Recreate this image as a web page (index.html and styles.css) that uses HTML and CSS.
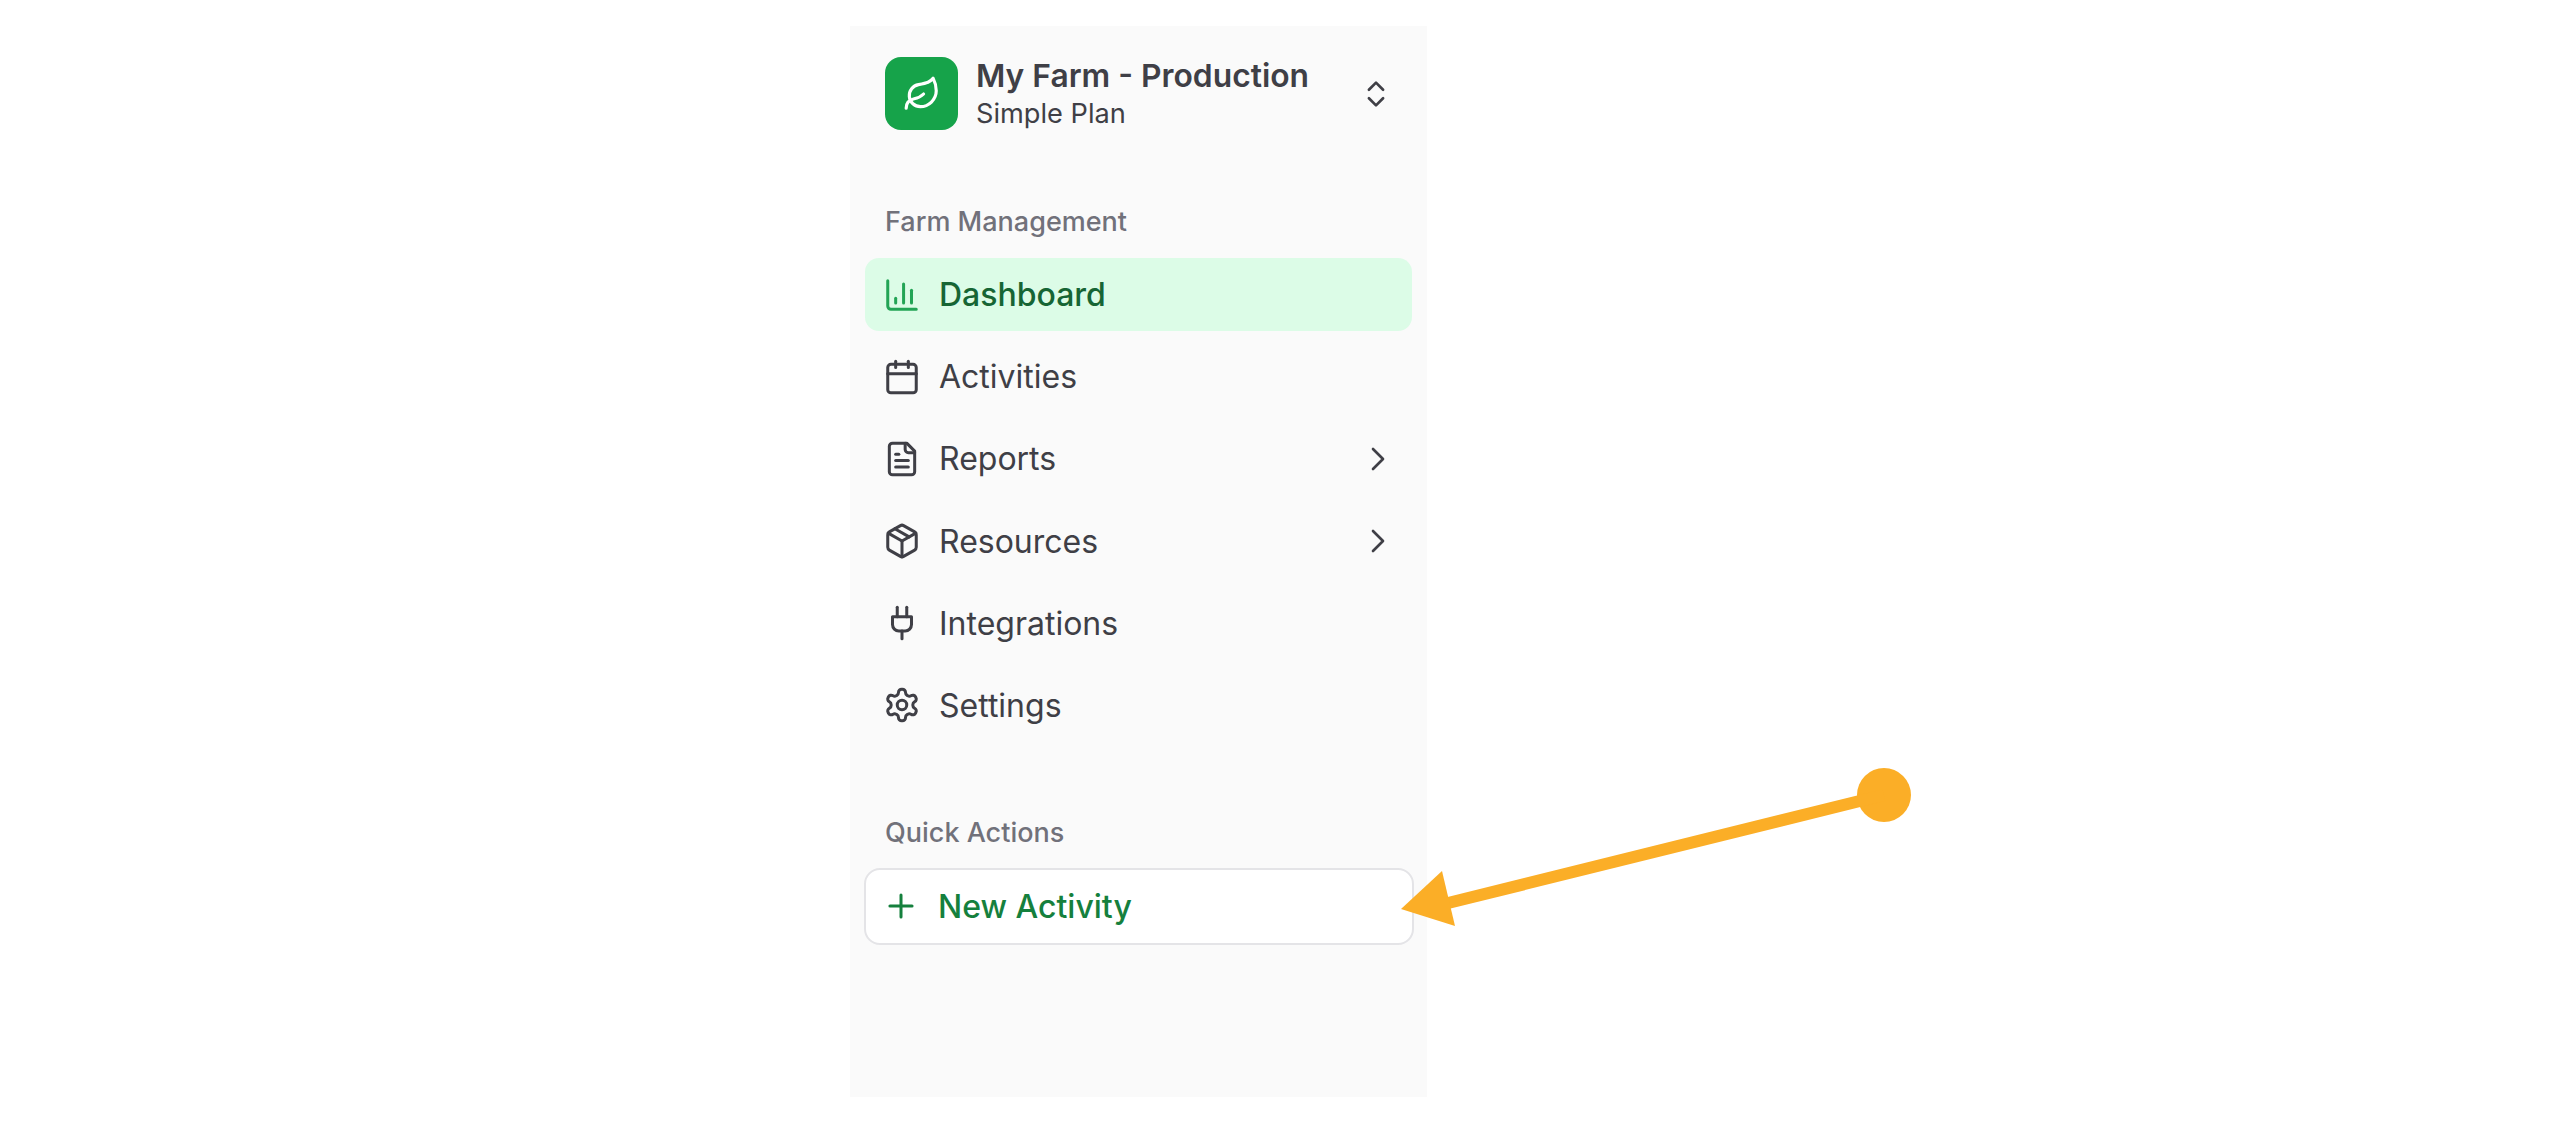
FILE: index.html
```html
<!DOCTYPE html>
<html lang="en">
<head>
<meta charset="utf-8">
<title>My Farm - Production</title>
<link rel="stylesheet" href="styles.css">
</head>
<body>
<div class="stage">
  <aside class="sidebar">
    <header class="team">
      <span class="logo">
        <svg class="logo-icon" viewBox="0 0 24 24"><path d="M11 20A7 7 0 0 1 9.8 6.1C15.5 5 17 4.48 19 2c1 2 2 4.18 2 8 0 5.5-4.78 10-10 10Z"/><path d="M2 21c0-3 1.85-5.36 5.08-6C9.5 14.52 12 13 13 12"/></svg>
      </span>
      <span class="team-text">
        <span class="team-name">My Farm - Production</span>
        <span class="team-plan">Simple Plan</span>
      </span>
      <svg class="updown" viewBox="0 0 24 24"><path d="m7 15 5 5 5-5"/><path d="m7 9 5-5 5 5"/></svg>
    </header>

    <section class="group group-main">
      <div class="group-label">Farm Management</div>
      <nav class="menu">
        <a class="item active">
          <svg class="icon" viewBox="0 0 24 24"><path d="M3 3v16a2 2 0 0 0 2 2h16"/><path d="M18 17V9"/><path d="M13 17V5"/><path d="M8 17v-3"/></svg>
          <span>Dashboard</span>
        </a>
        <a class="item">
          <svg class="icon" viewBox="0 0 24 24"><path d="M8 2v4"/><path d="M16 2v4"/><rect width="18" height="18" x="3" y="4" rx="2"/><path d="M3 10h18"/></svg>
          <span>Activities</span>
        </a>
        <a class="item">
          <svg class="icon" viewBox="0 0 24 24"><path d="M15 2H6a2 2 0 0 0-2 2v16a2 2 0 0 0 2 2h12a2 2 0 0 0 2-2V7Z"/><path d="M14 2v4a2 2 0 0 0 2 2h4"/><path d="M10 9H8"/><path d="M16 13H8"/><path d="M16 17H8"/></svg>
          <span>Reports</span>
          <svg class="chev" viewBox="0 0 24 24"><path d="m9 18 6-6-6-6"/></svg>
        </a>
        <a class="item">
          <svg class="icon" viewBox="0 0 24 24"><path d="M11 21.73a2 2 0 0 0 2 0l7-4A2 2 0 0 0 21 16V8a2 2 0 0 0-1-1.73l-7-4a2 2 0 0 0-2 0l-7 4A2 2 0 0 0 3 8v8a2 2 0 0 0 1 1.73z"/><path d="M12 22V12"/><path d="m3.3 7 8.7 5 8.7-5"/><path d="m7.5 4.27 9 5.15"/></svg>
          <span>Resources</span>
          <svg class="chev" viewBox="0 0 24 24"><path d="m9 18 6-6-6-6"/></svg>
        </a>
        <a class="item">
          <svg class="icon" viewBox="0 0 24 24"><path d="M12 22v-5"/><path d="M9 8V2"/><path d="M15 8V2"/><path d="M18 8v5a4 4 0 0 1-4 4h-4a4 4 0 0 1-4-4V8Z"/></svg>
          <span>Integrations</span>
        </a>
        <a class="item">
          <svg class="icon" viewBox="0 0 24 24"><path d="M12.22 2h-.44a2 2 0 0 0-2 2v.18a2 2 0 0 1-1 1.73l-.43.25a2 2 0 0 1-2 0l-.15-.08a2 2 0 0 0-2.73.73l-.22.38a2 2 0 0 0 .73 2.73l.15.1a2 2 0 0 1 1 1.72v.51a2 2 0 0 1-1 1.74l-.15.09a2 2 0 0 0-.73 2.73l.22.38a2 2 0 0 0 2.73.73l.15-.08a2 2 0 0 1 2 0l.43.25a2 2 0 0 1 1 1.73V20a2 2 0 0 0 2 2h.44a2 2 0 0 0 2-2v-.18a2 2 0 0 1 1-1.73l.43-.25a2 2 0 0 1 2 0l.15.08a2 2 0 0 0 2.73-.73l.22-.39a2 2 0 0 0-.73-2.73l-.15-.08a2 2 0 0 1-1-1.74v-.5a2 2 0 0 1 1-1.74l.15-.09a2 2 0 0 0 .73-2.73l-.22-.38a2 2 0 0 0-2.73-.73l-.15.08a2 2 0 0 1-2 0l-.43-.25a2 2 0 0 1-1-1.73V4a2 2 0 0 0-2-2z"/><circle cx="12" cy="12" r="3"/></svg>
          <span>Settings</span>
        </a>
      </nav>
    </section>

    <section class="group group-quick">
      <div class="group-label">Quick Actions</div>
      <a class="item action">
        <svg class="icon" viewBox="0 0 24 24"><path d="M5 12h14"/><path d="M12 5v14"/></svg>
        <span>New Activity</span>
      </a>
    </section>
  </aside>

  <svg class="callout" viewBox="0 0 2560 1122">
    <circle cx="1884" cy="795" r="27"/>
    <path class="callout-line" d="M1884 795 L1440 905"/>
    <path d="M1401 909 L1442 871 L1455 926 Z"/>
  </svg>
</div>
</body>
</html>
```

FILE: styles.css
```css
* { box-sizing: border-box; }
html, body { margin: 0; padding: 0; background: #fff; }
body { font-family: Inter, "Liberation Sans", sans-serif; color: #3f3f46; }
.stage { position: relative; width: 2560px; height: 1122px; padding: 26px 0 0 850px; overflow: hidden; }
.sidebar { width: 577px; height: 1071px; background: #fafafa; display: flex; flex-direction: column; padding: 0 15px; }
.team { display: flex; align-items: center; height: 73px; margin-top: 31px; padding: 0 19px 0 20px; }
.logo { width: 73px; height: 73px; border-radius: 16px; background: #16a34a; display: flex; align-items: center; justify-content: center; flex: none; }
.logo-icon { width: 38px; height: 38px; fill: none; stroke: #fff; stroke-width: 2; stroke-linecap: round; stroke-linejoin: round; }
.team-text { display: flex; flex-direction: column; margin-left: 18px; flex: 1; min-width: 0; }
.team-name { font-size: 31.8px; font-weight: 600; line-height: 40px; color: #3f3f46; white-space: nowrap; }
.team-plan { font-size: 27.2px; line-height: 36px; color: #3f3f46; white-space: nowrap; }
.updown { width: 34px; height: 34px; fill: none; stroke: #3f3f46; stroke-width: 1.9; stroke-linecap: round; stroke-linejoin: round; flex: none; }
.group-main { margin-top: 71px; }
.group-quick { margin-top: 70px; }
.group-label { height: 41px; padding-left: 20px; display: flex; align-items: center; font-size: 27px; font-weight: 500; color: #71717a; }
.menu { display: flex; flex-direction: column; gap: 9.2px; margin-top: 16px; }
.item { display: flex; align-items: center; height: 73px; padding: 0 14px 0 18px; border-radius: 14px; font-size: 32px; color: #3f3f46; }
.item > span { flex: 1; margin-left: 18px; }
.icon { width: 38px; height: 38px; fill: none; stroke: currentColor; stroke-width: 1.9; stroke-linecap: round; stroke-linejoin: round; flex: none; }
.chev { width: 40px; height: 40px; fill: none; stroke: currentColor; stroke-width: 1.6; stroke-linecap: round; stroke-linejoin: round; flex: none; }
.active { background: #dcfce7; color: #166534; font-weight: 500; }
.active .icon { color: #22a455; }
.action { margin: 15px -2px 0 -1px; height: 77px; padding-left: 16px; background: #fff; border: 2px solid #e4e4e7; color: #15803d; font-weight: 500; border-radius: 16px; }
.callout { position: absolute; left: 0; top: 0; width: 2560px; height: 1122px; fill: #fbae27; pointer-events: none; }
.callout-line { fill: none; stroke: #fbae27; stroke-width: 12; }
```
